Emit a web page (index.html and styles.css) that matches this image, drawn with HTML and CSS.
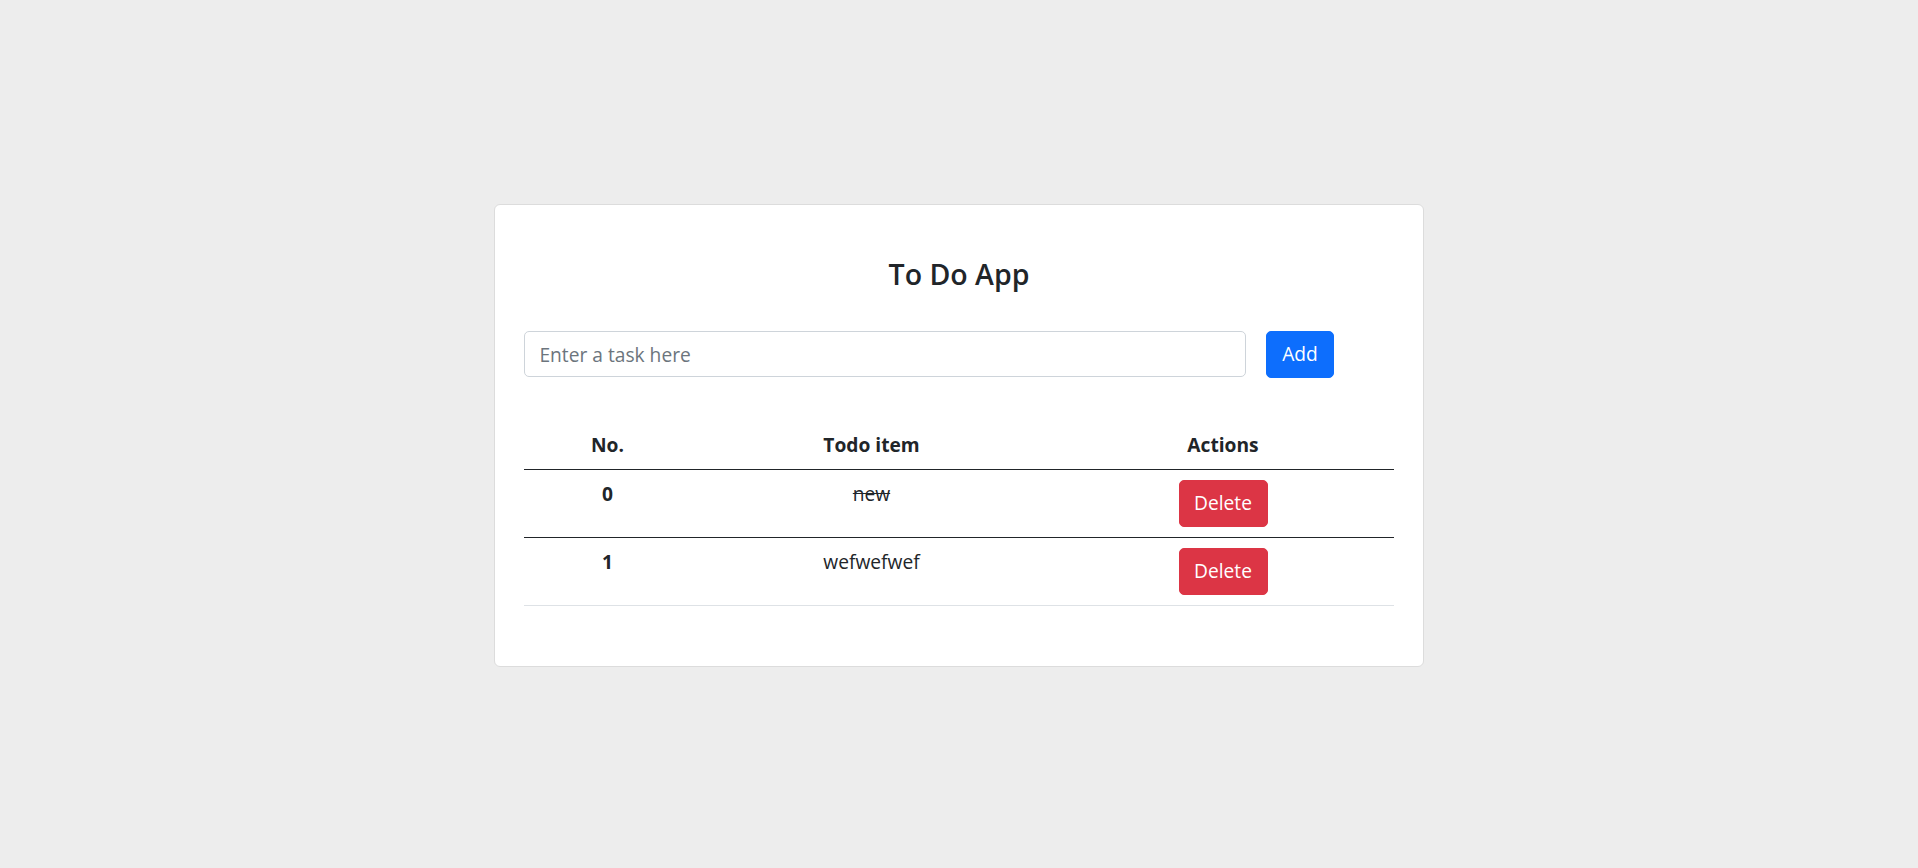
FILE: index.html
```html
<!DOCTYPE html>
<html lang="en">
<head>
<meta charset="utf-8">
<title>To Do App</title>
<link rel="stylesheet" href="styles.css">
</head>
<body>
<main class="page">
  <section class="card">
    <h2 class="title">To Do App</h2>
    <form class="task-form">
      <input class="task-input" type="text" placeholder="Enter a task here">
      <button class="btn btn-primary" type="button">Add</button>
    </form>
    <table class="todo-table">
      <colgroup>
        <col class="col-no">
        <col class="col-item">
        <col class="col-actions">
      </colgroup>
      <thead>
        <tr>
          <th>No.</th>
          <th>Todo item</th>
          <th>Actions</th>
        </tr>
      </thead>
      <tbody>
        <tr class="row-dark">
          <th>0</th>
          <td><span class="done">new</span></td>
          <td><button class="btn btn-danger" type="button">Delete</button></td>
        </tr>
        <tr>
          <th>1</th>
          <td>wefwefwef</td>
          <td><button class="btn btn-danger" type="button">Delete</button></td>
        </tr>
      </tbody>
    </table>
  </section>
</main>
</body>
</html>
```

FILE: styles.css
```css
* {
  box-sizing: border-box;
}

html, body {
  margin: 0;
  padding: 0;
}

body {
  background: #ededed;
  color: #212529;
  font-family: "Open Sans", "Noto Sans", sans-serif;
  font-size: 19.2px;
  line-height: 1.5;
}

.page {
  height: 868px;
  padding-top: 3px;
  display: flex;
  align-items: center;
  justify-content: center;
}

.card {
  width: 930px;
  background: #ffffff;
  border: 1px solid #dcdcdc;
  border-radius: 6px;
  padding: 29px;
}

.title {
  margin: 23px 0 40px;
  font-size: 28.5px;
  line-height: 1.2;
  font-weight: 600;
  text-align: center;
}

.task-form {
  display: flex;
  align-items: flex-start;
  gap: 20px;
  margin: 0 0 43px;
}

.task-input {
  width: 722px;
  height: 46px;
  padding: 0 14.4px;
  border: 1.2px solid #ced4da;
  border-radius: 5px;
  font-family: inherit;
  font-size: 19.2px;
  color: #212529;
  background: #fff;
}

.task-input::placeholder {
  color: #6c757d;
}

.btn {
  display: inline-block;
  font-family: inherit;
  font-size: 19.2px;
  line-height: 28.8px;
  padding: 8px 14.4px;
  border: 1px solid transparent;
  border-radius: 5px;
  color: #fff;
  cursor: pointer;
}

.btn-primary {
  width: 68px;
  height: 47px;
  padding: 0;
  background: #0d6efd;
  border-color: #0d6efd;
}

.btn-danger {
  width: 89px;
  padding-left: 0;
  padding-right: 0;
  background: #dc3545;
  border-color: #dc3545;
}

.todo-table {
  width: 870px;
  border-collapse: collapse;
  table-layout: fixed;
  margin-bottom: 31px;
}

.col-no { width: 167px; }
.col-item { width: 361px; }
.col-actions { width: 342px; }

.todo-table th,
.todo-table td {
  text-align: center;
  vertical-align: top;
  padding: 9.6px 8px;
  line-height: 28.8px;
}

.todo-table th {
  font-weight: 700;
}

.todo-table td {
  font-weight: 400;
}

.todo-table thead tr {
  border-bottom: 1px solid #212529;
}

.todo-table tbody th,
.todo-table tbody td {
  padding-top: 10px;
  padding-bottom: 10px;
}

.todo-table tbody tr {
  border-bottom: 1px solid #dee2e6;
}

.todo-table tbody tr.row-dark {
  border-bottom-color: #212529;
}

.done {
  text-decoration: line-through;
}
```
